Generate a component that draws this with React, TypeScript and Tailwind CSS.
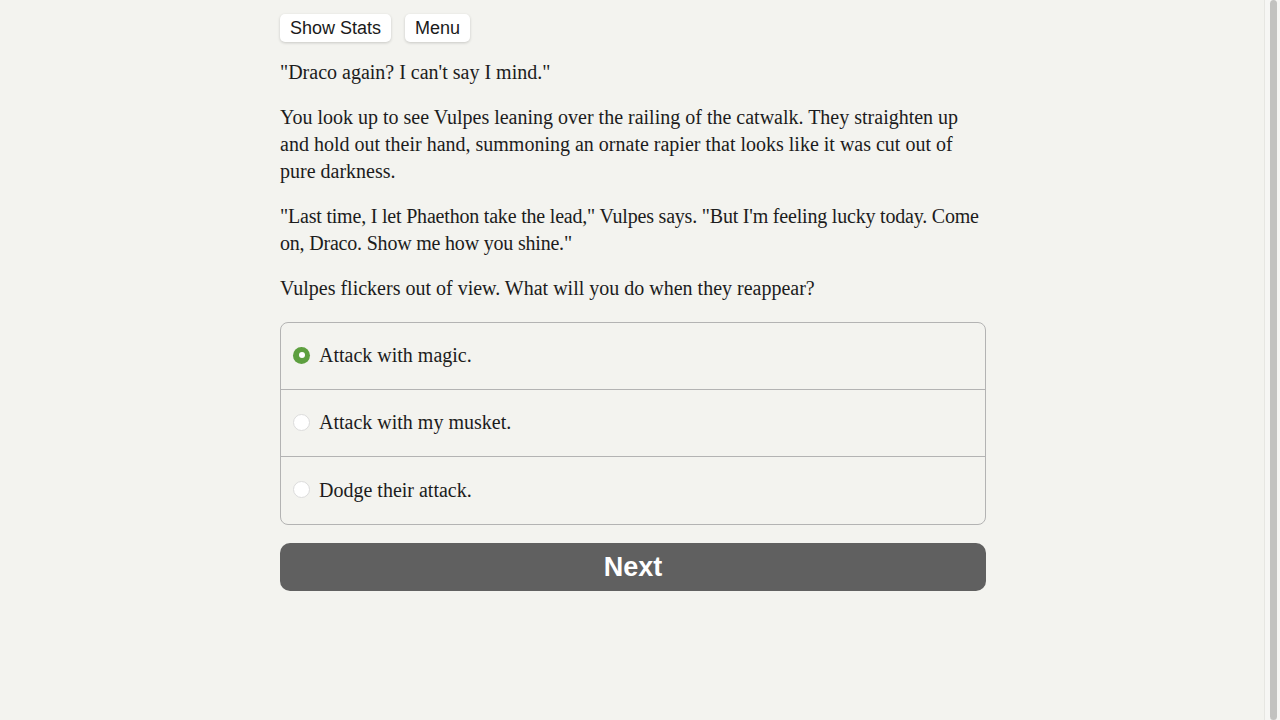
import { useState } from "react";

const paragraphs = [
  { text: "\"Draco again? I can't say I mind.\"", tight: false },
  {
    text: "You look up to see Vulpes leaning over the railing of the catwalk. They straighten up and hold out their hand, summoning an ornate rapier that looks like it was cut out of pure darkness.",
    tight: false,
  },
  {
    text: "\"Last time, I let Phaethon take the lead,\" Vulpes says. \"But I'm feeling lucky today. Come on, Draco. Show me how you shine.\"",
    tight: true,
  },
  { text: "Vulpes flickers out of view. What will you do when they reappear?", tight: false },
];

const choices = ["Attack with magic.", "Attack with my musket.", "Dodge their attack."];

export default function App() {
  const [picked, setPicked] = useState(0);

  return (
    <div className="flex h-[720px] w-full overflow-hidden bg-[#f3f3ef]">
      <main className="flex-1 flex justify-center pl-[2px]">
        <div className="w-[706px] pt-[14px]">
          {/* top bar */}
          <div className="flex gap-[14px] mb-[17px] font-['Liberation_Sans',Arial,sans-serif]">
            <button className="h-[28px] px-[10px] rounded-[5px] bg-white text-[18px] text-[#1a1a1a] shadow-[0_1px_3px_rgba(0,0,0,0.18)]">
              Show Stats
            </button>
            <button className="h-[28px] px-[10px] rounded-[5px] bg-white text-[18px] text-[#1a1a1a] shadow-[0_1px_3px_rgba(0,0,0,0.18)]">
              Menu
            </button>
          </div>

          {/* story text */}
          <div className="font-['Liberation_Serif','Times_New_Roman',serif] text-[20px] leading-[27px] text-[#1c1c1c]">
            {paragraphs.map((p, i) => (
              <p key={i} className={p.tight ? "mb-[18px] tracking-[-0.2px]" : "mb-[18px]"}>
                {p.text}
              </p>
            ))}
          </div>

          {/* choices */}
          <div className="mt-[20px] rounded-[8px] border border-[#b3b3b3] divide-y divide-[#b3b3b3] overflow-hidden">
            {choices.map((c, i) => (
              <label
                key={c}
                onClick={() => setPicked(i)}
                className="flex items-center h-[67px] pl-[12px] pb-[2px] cursor-pointer font-['Liberation_Serif','Times_New_Roman',serif] text-[20px] text-[#1c1c1c]"
              >
                {picked === i ? (
                  <span className="w-[17px] h-[17px] rounded-full bg-[#5d9f3f] flex items-center justify-center">
                    <span className="w-[6px] h-[6px] rounded-full bg-white" />
                  </span>
                ) : (
                  <span className="w-[17px] h-[17px] rounded-full bg-white border border-[#dcdcdc]" />
                )}
                <span className="ml-[9px]">{c}</span>
              </label>
            ))}
          </div>

          <button className="mt-[18px] w-full h-[48px] rounded-[10px] bg-[#606060] text-white text-[27px] font-bold font-['Liberation_Sans',Arial,sans-serif]">
            Next
          </button>
        </div>
      </main>

      {/* scrollbar */}
      <div className="w-[16px] flex pl-[5px] bg-[#f6f6f4] border-l border-[#e6e6e2]">
        <div className="w-[7px] h-full rounded-full bg-[#c2c2c0]" />
      </div>
    </div>
  );
}
